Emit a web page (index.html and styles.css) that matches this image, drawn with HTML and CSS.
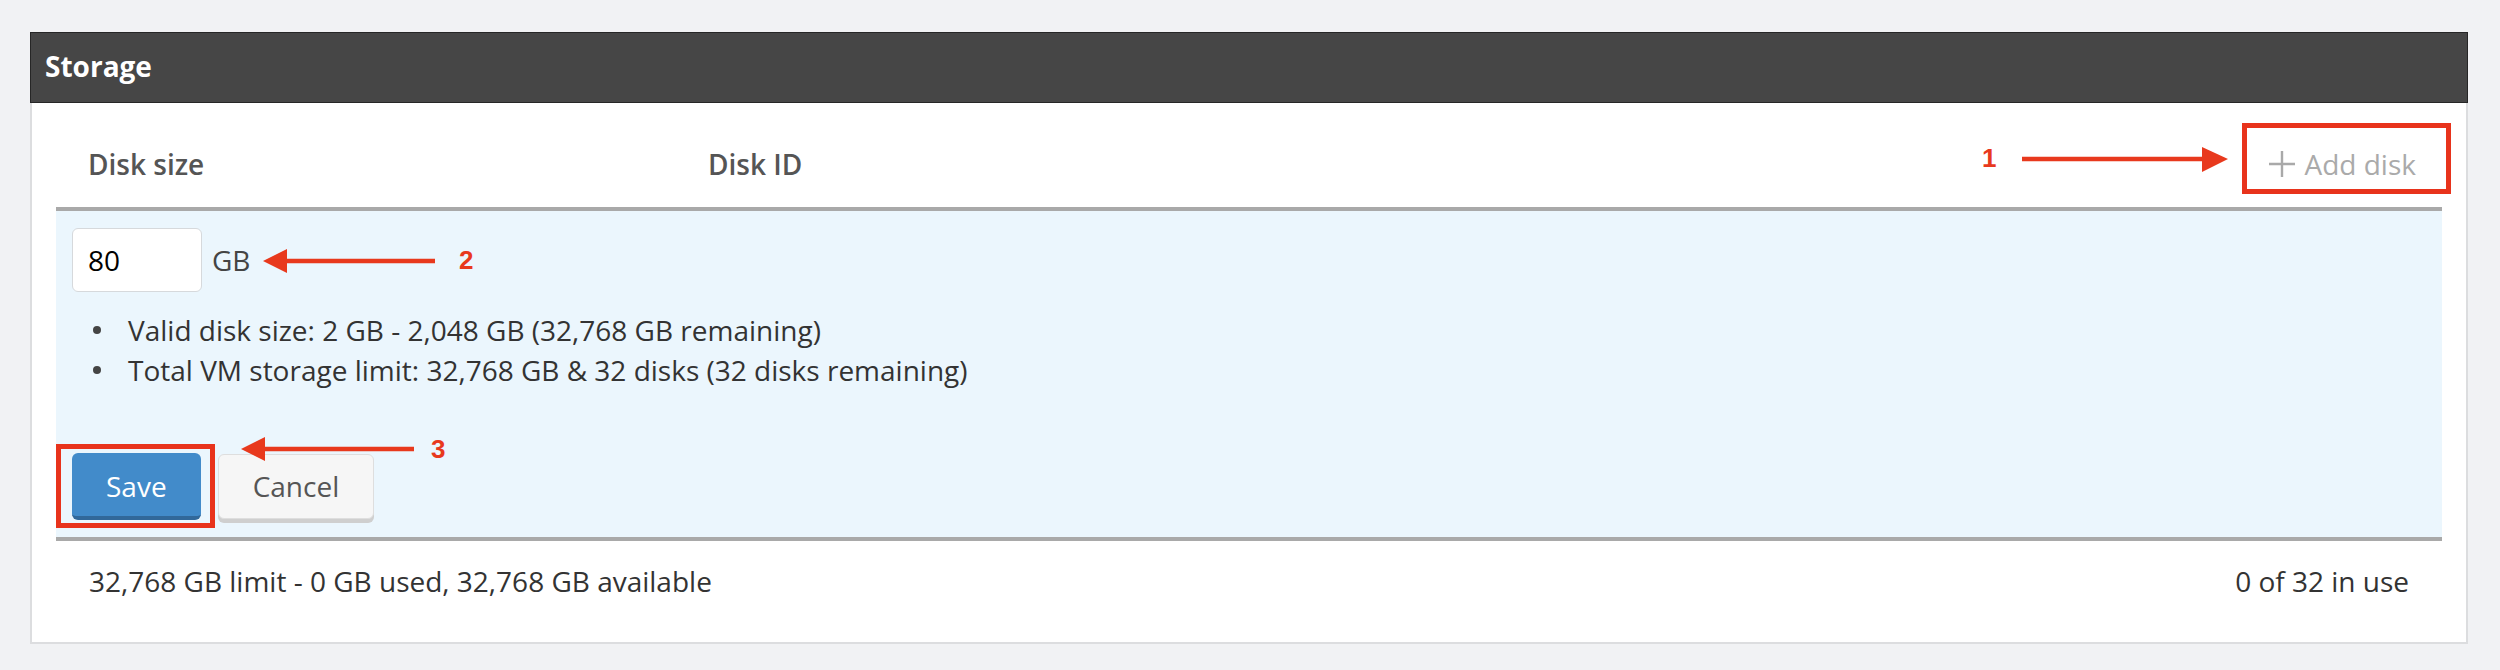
FILE: index.html
```html
<!DOCTYPE html>
<html lang="en">
<head>
<meta charset="utf-8">
<title>Storage</title>
<link rel="stylesheet" href="styles.css">
</head>
<body>
<div class="page">
  <section class="panel">
    <header class="panel-heading">Storage</header>
    <div class="panel-body">
      <div class="table-head">
        <div class="th">Disk size</div>
        <div class="th">Disk ID</div>
        <div class="th th-action">
          <button class="add-disk" type="button">
            <svg class="plus" width="28" height="28" viewBox="0 0 28 28"><path d="M14 1v26M1 14h26" stroke="#a9a9a9" stroke-width="2.4" fill="none"/></svg>
            <span>Add disk</span>
          </button>
        </div>
      </div>
      <div class="edit-row">
        <div class="size-field">
          <input class="size-input" type="text" value="80">
          <span class="unit">GB</span>
        </div>
        <ul class="limits">
          <li>Valid disk size: 2 GB - 2,048 GB (32,768 GB remaining)</li>
          <li>Total VM storage limit: 32,768 GB &amp; 32 disks (32 disks remaining)</li>
        </ul>
        <div class="actions">
          <button class="btn btn-primary" type="button">Save</button>
          <button class="btn btn-default" type="button">Cancel</button>
        </div>
      </div>
      <div class="table-foot">
        <span>32,768 GB limit - 0 GB used, 32,768 GB available</span>
        <span>0 of 32 in use</span>
      </div>
    </div>
  </section>

  <div class="note-box note-box-1"></div>
  <div class="note-box note-box-3"></div>

  <svg class="arrow arrow-1" width="206" height="26" viewBox="0 0 206 26"><path d="M0 12h182" stroke="#e8391d" stroke-width="4.5"/><path d="M180 0L206 12L180 25Z" fill="#e8391d"/></svg>
  <svg class="arrow arrow-2" width="172" height="26" viewBox="0 0 172 26"><path d="M22 12h150" stroke="#e8391d" stroke-width="4.5"/><path d="M24 0L0 12L24 24Z" fill="#e8391d"/></svg>
  <svg class="arrow arrow-3" width="173" height="26" viewBox="0 0 173 26"><path d="M22 12h151" stroke="#e8391d" stroke-width="4.5"/><path d="M24 0L0 12L24 24Z" fill="#e8391d"/></svg>

  <span class="note-num num-1">1</span>
  <span class="note-num num-2">2</span>
  <span class="note-num num-3">3</span>
</div>
</body>
</html>
```

FILE: styles.css
```css
html, body {
  margin: 0;
  padding: 0;
}
body {
  background: #f1f2f4;
  font-family: "Open Sans", "Liberation Sans", sans-serif;
  font-size: 28px;
  line-height: 40px;
  color: #333;
}
.page {
  position: relative;
  width: 2500px;
  height: 670px;
  padding-top: 32px;
  box-sizing: border-box;
}
.panel {
  margin: 0 32px 0 30px;
  background: #fff;
}
.panel-heading {
  height: 71px;
  box-sizing: border-box;
  background: #464646;
  border: 1px solid #262626;
  color: #fff;
  font-weight: 700;
  font-size: 28px;
  line-height: 67px;
  padding: 0 14px;
}
.panel-body {
  border: 2px solid #dcdddf;
  border-top: none;
  padding: 0 24px 21px 24px;
}
.table-head {
  display: grid;
  grid-template-columns: 620px 1fr auto;
  align-items: center;
  height: 104px;
  padding-top: 18px;
  box-sizing: border-box;
}
.th {
  padding-left: 32px;
  font-weight: 600;
  color: #555;
}
.th-action {
  padding-right: 26px;
}
.add-disk {
  display: flex;
  align-items: center;
  gap: 9px;
  border: none;
  background: none;
  padding: 0;
  font-family: inherit;
  font-size: 28px;
  line-height: 40px;
  color: #aaa;
  font-weight: 400;
}
.plus {
  display: block;
}
.edit-row {
  background: #ebf6fd;
  border-top: 4px solid #a9a9a9;
  border-bottom: 4px solid #a9a9a9;
  padding: 17px 16px 17px 16px;
}
.size-field {
  display: flex;
  align-items: center;
  gap: 10px;
}
.size-input {
  width: 130px;
  height: 64px;
  box-sizing: border-box;
  border: 1px solid #d6d9dc;
  border-radius: 6px;
  background: #fff;
  font-family: inherit;
  font-size: 28px;
  color: #000;
  padding: 0 15px;
  margin: 0;
  outline: none;
}
.unit {
  color: #444;
}
.limits {
  margin: 18px 0 0 0;
  padding: 0 0 0 56px;
  list-style: none;
}
.limits li {
  display: flex;
  align-items: center;
  position: relative;
}
.limits li::before {
  content: "";
  width: 8px;
  height: 8px;
  border-radius: 50%;
  background: #444;
  margin-left: -35px;
  margin-right: 27px;
  flex: none;
}
.actions {
  display: flex;
  align-items: flex-start;
  gap: 17px;
  margin-top: 63px;
}
.btn {
  font-family: inherit;
  font-size: 28px;
  margin: 0;
  padding: 0 34px;
  border-radius: 6px;
  box-sizing: border-box;
}
.btn-primary {
  height: 67px;
  background: #428bca;
  color: #fff;
  border: none;
  border-bottom: 4px solid #31689a;
  padding-top: 2px;
}
.btn-default {
  height: 65px;
  margin-top: 1px;
  background: #f6f6f6;
  color: #555;
  border: 1px solid #dedede;
  box-shadow: 0 4px 0 #cfcfcf;
  padding-bottom: 2px;
}
.table-foot {
  display: flex;
  justify-content: space-between;
  padding: 20px 33px 20px 33px;
  color: #333;
}

/* annotation overlay */
.note-box {
  position: absolute;
  border: 5px solid #e8331c;
  box-sizing: border-box;
}
.note-box-1 {
  left: 2242px;
  top: 123px;
  width: 209px;
  height: 71px;
}
.note-box-3 {
  left: 56px;
  top: 444px;
  width: 159px;
  height: 84px;
}
.arrow {
  position: absolute;
  display: block;
}
.arrow-1 {
  left: 2022px;
  top: 147px;
}
.arrow-2 {
  left: 263px;
  top: 249px;
}
.arrow-3 {
  left: 241px;
  top: 437px;
}
.note-num {
  position: absolute;
  font-family: "Liberation Sans", Arial, sans-serif;
  font-weight: 700;
  font-size: 26px;
  line-height: 26px;
  color: #e8391d;
}
.num-1 { left: 1982px; top: 145px; }
.num-2 { left: 459px; top: 247px; }
.num-3 { left: 431px; top: 436px; }
```
